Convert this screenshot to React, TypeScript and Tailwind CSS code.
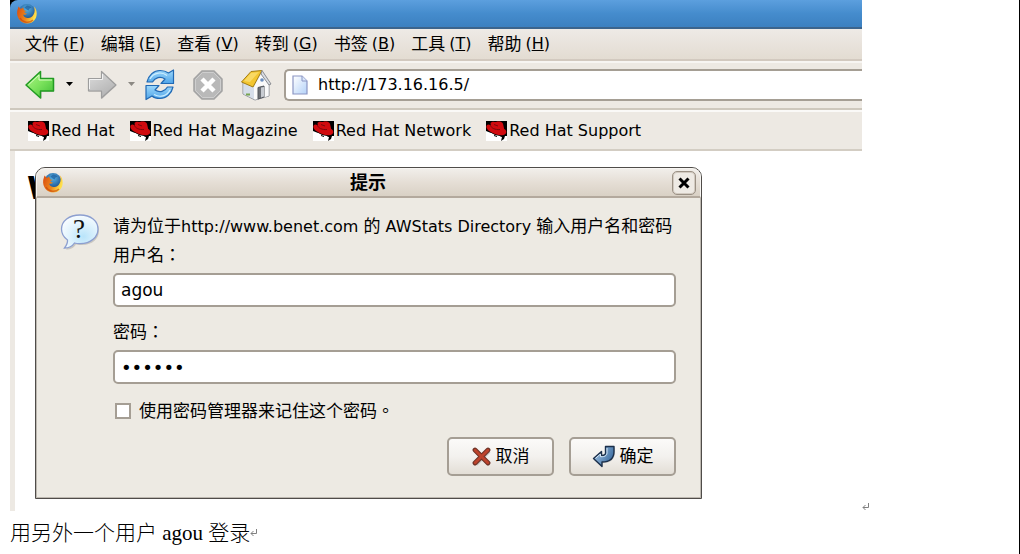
import React from "react";

const menus = [
  { label: "文件", accessKey: "F" },
  { label: "编辑", accessKey: "E" },
  { label: "查看", accessKey: "V" },
  { label: "转到", accessKey: "G" },
  { label: "书签", accessKey: "B" },
  { label: "工具", accessKey: "T" },
  { label: "帮助", accessKey: "H" },
];

const bookmarks = ["Red Hat", "Red Hat Magazine", "Red Hat Network", "Red Hat Support"];

const FirefoxIcon = () => (
  <svg width="22" height="22" viewBox="0 0 22 22" aria-hidden="true">
    <defs>
      <radialGradient id="globe" cx="0.5" cy="0.3" r="0.7">
        <stop offset="0" stopColor="#58b4e6" />
        <stop offset="1" stopColor="#123f80" />
      </radialGradient>
      <linearGradient id="fox" x1="0" y1="0" x2="1" y2="0.3">
        <stop offset="0" stopColor="#d94a10" />
        <stop offset="0.6" stopColor="#ee8a1c" />
        <stop offset="1" stopColor="#ffe04a" />
      </linearGradient>
    </defs>
    <circle cx="11" cy="9.5" r="8.5" fill="url(#globe)" />
    <path d="M11 2.5c2 0 3.5 1 4.500 2l-2 1-1 2-2-1-2-2z" fill="#1c5c9c" opacity=".7" />
    <path
      d="M2.500 3.500 1.200 8c-1 7 4 12.500 10 12.500 6 0 9.500-4.500 9.500-10 0-3-1-5.500-2.700-7 .8 2.500 1 5-.2 7.500-1.300 3-3.800 4.500-6.500 4-2.500-.4-4-2-4.200-3.500 1 .5 2.700.5 4-.8-1-.4-2.300-.3-2.800-1.700L11 8 8.300 7.500 7 4.600 5 6z"
      fill="url(#fox)"
    />
    <path d="M4 15c2.500 4.500 9 6 13 2" stroke="#c63d0c" strokeWidth="1.500" fill="none" opacity=".6" />
  </svg>
);

const RedHatIcon = () => (
  <svg width="21" height="20" viewBox="0 0 21 20" aria-hidden="true">
    <path fill="#fff" d="M0 0h21v20H0z" />
    <path fill="#000" d="M0 0h21v15h-2l-1 3-3 2 1-4-6-1-5-3-5-2z" />
    <path fill="#fff" d="M5 12l4 2 5 1 1 1.500-2 .5-1 3H4z" />
    <path
      fill="#d00a0e"
      d="M4.500 2C6 0 8.500.8 10 1c2.500-.8 6-.5 7 1.800l1.200 5.200c3 1.500 2.800 5-.7 6-4 .8-9.500-.7-13.500-3.500C1 8.500-.5 6 .8 4.200c1-1 2.700-.8 4 .5z"
    />
    <path d="M4.500 4.500c.8 2.500 4.500 4.500 9.500 4M8 3.500l4 1.500" stroke="#7c080b" strokeWidth="1" fill="none" />
    <path d="M8 14.500l3 1" stroke="#000" strokeWidth="1" />
  </svg>
);

const BackIcon = () => (
  <svg width="32" height="32" viewBox="0 0 32 32" aria-hidden="true">
    <defs>
      <linearGradient id="green" x1="0" y1="0" x2="1" y2="1">
        <stop offset="0" stopColor="#b4f58a" />
        <stop offset="0.5" stopColor="#7be25c" />
        <stop offset="1" stopColor="#3ebc35" />
      </linearGradient>
    </defs>
    <path d="M3 17 17 4v7h13v12H18v7z" fill="#000" opacity=".12" />
    <path d="M2 16 16.500 2.500V9.500H29.500V22H16.500v7z" fill="url(#green)" stroke="#229b23" strokeWidth="1.500" strokeLinejoin="round" />
    <path d="M4.500 15.800 15 6v5h13" stroke="#d8ffc2" strokeWidth="1" fill="none" />
  </svg>
);

const ForwardIcon = () => (
  <svg width="32" height="32" viewBox="0 0 32 32" aria-hidden="true">
    <defs>
      <linearGradient id="gray" x1="0" y1="0" x2="0.6" y2="1">
        <stop offset="0" stopColor="#dedede" />
        <stop offset="1" stopColor="#b2b2b2" />
      </linearGradient>
    </defs>
    <path d="M30 17 16 30h-1v-7H3v-2z" fill="#000" opacity=".12" />
    <path d="M30 16 15.500 2.500V9.500H2.500V22h13v7z" fill="url(#gray)" stroke="#9d9d9d" strokeWidth="1.200" strokeLinejoin="round" />
    <path d="M3.500 20V10.500h13V5" stroke="#f2f2f2" strokeWidth="1" fill="none" />
  </svg>
);

const ReloadIcon = () => (
  <svg width="32" height="32" viewBox="0 0 32 32" aria-hidden="true">
    <defs>
      <linearGradient id="blue" x1="0" y1="0" x2="0" y2="1">
        <stop offset="0" stopColor="#9ed8fb" />
        <stop offset="1" stopColor="#4fa4e8" />
      </linearGradient>
    </defs>
    <g fill="url(#blue)" stroke="#2169b4" strokeWidth="1.200" strokeLinejoin="round">
      <path d="M3 13C4.500 6 10 1.500 16 1.500c3.500 0 6 .7 8.500 2.500L29.500 1v13.500H17l4-4.500c-4.500-3-10-1.500-12.500 3z" />
      <path d="M29 18c-1.500 7-7 11.500-13 11.500-3.500 0-6-.7-8-2.500L2 30.500V16.500h13l-4 4.500c4.500 3 10 1.500 12.500-3z" />
    </g>
    <path d="M6 10c3-6 11-8 17-3.500M26 21c-3 6-10 8-16 4.500" stroke="#cdeeff" strokeWidth="1.200" fill="none" />
  </svg>
);

const StopIcon = () => (
  <svg width="32" height="32" viewBox="0 0 32 32" aria-hidden="true">
    <path d="M10 2h12l8 8v12l-8 8H10l-8-8V10z" fill="#b9b9b9" stroke="#a3a3a3" strokeWidth="1.500" />
    <path d="M10.500 3.500h11l7 7v11l-7 7h-11l-7-7v-11z" fill="none" stroke="#cecece" />
    <path d="m10 10 12 12m0-12-12 12" stroke="#fff" strokeWidth="4.500" />
  </svg>
);

const HomeIcon = () => (
  <svg width="32" height="32" viewBox="0 0 32 32" aria-hidden="true">
    <path d="M3 14v11l12 6 14-4V14L22 3z" fill="#e9eef4" stroke="#8c8f96" strokeLinejoin="round" />
    <path d="M3.500 14v11L15 30.500V17z" fill="#d6deea" />
    <path d="m22 4-8 14v12l1.500.5L28.500 27V14z" fill="#fafafa" />
    <path d="M18 18.500l6-1.500v11l-6 2z" fill="#6d7177" stroke="#53575d" />
    <path d="M21 18.500 24 18v9.500l-3 1z" fill="#c8ccd2" />
    <circle cx="22" cy="11" r="1.800" fill="#6b8fc0" />
    <path d="M11 2.500 22 1.500 13 18 1.500 13z" fill="#f3c631" stroke="#a37d14" strokeLinejoin="round" />
    <path d="m11 4 8-1-9 10-6-1z" fill="#fbe17a" opacity=".7" />
    <path d="m22 1.500 9 13.500-2 1-8-11z" fill="#d9dde3" stroke="#8a8d92" strokeLinejoin="round" />
    <path d="M6 25.500h4" stroke="#78a550" strokeWidth="2" />
  </svg>
);

const PageIcon = () => (
  <svg width="16" height="20" viewBox="0 0 16 20" aria-hidden="true">
    <defs>
      <linearGradient id="sheet" x1="0" y1="0" x2="1" y2="1">
        <stop offset="0" stopColor="#ffffff" />
        <stop offset="1" stopColor="#b4d2f8" />
      </linearGradient>
    </defs>
    <path d="M1 1h9l5 5v13H1z" fill="url(#sheet)" stroke="#8b96c4" strokeWidth="1.200" />
    <path d="M10 1v5h5" fill="#dbe8fb" stroke="#8b96c4" />
  </svg>
);

const QuestionIcon = () => (
  <svg width="40" height="37" viewBox="0 0 40 37" className="block" aria-hidden="true">
    <defs>
      <radialGradient id="bubble" cx="0.6" cy="0.65" r="0.7">
        <stop offset="0" stopColor="#b9e4fa" />
        <stop offset="0.6" stopColor="#e3f4fd" />
        <stop offset="1" stopColor="#fafdff" />
      </radialGradient>
    </defs>
    <path d="M21 2C10 2 3 8 3 16c0 5 2.500 8.500 6 11 .3 3-.7 5.500-3 8.500 5 0 8-2 10-5 1.500.5 4 .5 6 .5 11 0 17-6.500 17-14.500C39 8 32 2 21 2z" fill="#000" opacity=".15" />
    <path d="M20 1C9 1 1.500 7 1.500 15c0 5 2.500 8.500 6 11 .3 3-.7 5-3 8 5 0 8-2 10-5 1.500.5 3.500.7 5.500.7C31 29.700 38 23 38 15S31 1 20 1z" fill="url(#bubble)" stroke="#8c9fd0" strokeWidth="1.300" />
    <text x="13" y="24" fontSize="27" fill="#111" fontFamily="'Liberation Serif', serif">?</text>
  </svg>
);

const CancelIcon = () => (
  <svg width="20" height="20" viewBox="0 0 20 20" aria-hidden="true">
    <path d="m4 4 13 13m0-13L4 17" stroke="#000" strokeWidth="4" opacity=".18" />
    <path d="m3 3 13 13m0-13-13 13" stroke="#6e3328" strokeWidth="4.800" strokeLinecap="round" />
    <path d="m3.200 3.200 12.600 12.600m0-12.600L3.200 15.800" stroke="#bd432c" strokeWidth="2.800" strokeLinecap="round" />
  </svg>
);

const OkIcon = () => (
  <svg width="24" height="24" viewBox="0 0 24 24" aria-hidden="true">
    <defs>
      <linearGradient id="steel" x1="0" y1="0" x2="1" y2="0.5">
        <stop offset="0" stopColor="#a9cbe8" />
        <stop offset="1" stopColor="#3e6ea2" />
      </linearGradient>
    </defs>
    <path d="M2 15 10 8v4c4 0 5-1 4.500-5V2.500H23V7c0 8-5 11-12.500 11v4z" fill="#000" opacity=".15" />
    <path
      d="M1.500 13.500 9.500 6.500v4c3.500 0 4.500-1 4-4.500V1.500h8.500v5c0 8-5 10.500-12 10.500v4.500z"
      fill="url(#steel)"
      stroke="#1b2f4a"
      strokeWidth="1.400"
      strokeLinejoin="round"
    />
    <path d="M3.500 13.300 8.500 9v2.700c5 .3 7-1.500 6.500-5.500V3" stroke="#d5e7f6" fill="none" />
  </svg>
);

const ReturnMark = () => (
  <svg width="8" height="8" viewBox="0 0 8 8" className="block shrink-0" aria-hidden="true">
    <path d="M6.500 0v4.500H1M3.500 2 1 4.500 3.500 7" stroke="#808080" fill="none" />
  </svg>
);

const DropArrow = ({ color }: any) => (
  <svg width="8" height="5" viewBox="0 0 8 5" aria-hidden="true">
    <path d="M0 0h7L3.500 4z" fill={color} />
  </svg>
);

const DialogButton = ({ icon, label }: any) => (
  <button
    type="button"
    className="flex h-[39px] w-[107px] items-center justify-center gap-1 rounded-[5px] border-2 border-[#a59e94] bg-linear-to-b from-[#fbfaf9] via-[#f3f1ee] to-[#e3ded6] text-[17px]"
  >
    {icon}
    {label}
  </button>
);

const PromptDialog = () => (
  <form
    role="dialog"
    aria-labelledby="prompt-title"
    className="relative mr-[160px] ml-5 rounded-t-[10px] border border-[#4f4c49] bg-[#edeae3] shadow-[inset_0_0_0_1px_#bdb8b0]"
  >
    <header className="flex h-[30px] items-center rounded-t-[9px] border border-b-2 border-[#f7f5f2] border-b-[#b3a99d] bg-linear-to-b from-[#f1eeea] via-[#e5ded5] to-[#d9d1c5] pr-1 pl-[5px]">
      <FirefoxIcon />
      <h2 id="prompt-title" className="flex-1 text-center text-[18px] leading-6 font-bold">
        提示
      </h2>
      <button
        type="button"
        aria-label="关闭"
        className="flex h-6 w-6 items-center justify-center rounded-[5px] border border-[#9b9185] bg-[#eeeae4] shadow-[inset_0_0_0_1px_#d2cac0]"
      >
        <svg width="12" height="12" viewBox="0 0 12 12" aria-hidden="true">
          <path d="m1.500 1.500 9 9m0-9-9 9" stroke="#000" strokeWidth="3" />
        </svg>
      </button>
    </header>
    <div className="flex gap-[13px] pt-3.5 pr-[25px] pb-[22px] pl-6">
      <div className="shrink-0 pt-0.5">
        <QuestionIcon />
      </div>
      <div className="min-w-0 flex-1">
        <p className="text-[17px] leading-7 whitespace-nowrap">
          请为位于<span className="text-[16px]">http://www.benet.com </span>的
          <span className="text-[16px]"> AWStats Directory </span>输入用户名和密码
        </p>
        <label htmlFor="user" className="block font-['DejaVu_Sans','Noto_Sans_CJK_TC',sans-serif] text-[17px] leading-7">
          用户名：
        </label>
        <input
          id="user"
          type="text"
          defaultValue="agou"
          className="mt-1 block h-[34px] w-full rounded-[5px] border-2 border-[#a59e94] bg-white px-1.5 text-[17px] outline-none"
        />
        <label htmlFor="pass" className="mt-[11px] block font-['DejaVu_Sans','Noto_Sans_CJK_TC',sans-serif] text-[17px] leading-7">
          密码：
        </label>
        <input
          id="pass"
          type="password"
          defaultValue="123456"
          className="mt-1 block h-[34px] w-full rounded-[5px] border-2 border-[#a59e94] bg-white px-1.5 text-[18px] outline-none"
        />
        <label className="mt-[13px] flex items-center gap-2 font-['DejaVu_Sans','Noto_Sans_CJK_TC',sans-serif] text-[17px] leading-7">
          <input type="checkbox" className="ml-0.5 h-4 w-4 appearance-none border-2 border-[#a59e94] bg-white" />
          使用密码管理器来记住这个密码。
        </label>
        <div className="mt-3 flex justify-end gap-[15px]">
          <DialogButton icon={<CancelIcon />} label="取消" />
          <DialogButton icon={<OkIcon />} label="确定" />
        </div>
      </div>
    </div>
  </form>
);

const BrowserWindow = () => (
  <section className="min-w-0 flex-1 bg-[#ede9e3]">
    <header className="bg-black">
      <div className="flex h-[29px] items-center rounded-tl-lg border-b-2 border-[#3c648c] bg-linear-to-b from-[#5c9fde] via-[#458ccd] to-[#3c80c0] pl-1.5">
        <FirefoxIcon />
      </div>
    </header>
    <nav className="flex h-8 items-center gap-4 border-b-2 border-[#d2c9bf] bg-linear-to-b from-[#eeeae6] to-[#e3dcd2] pl-[15px]">
      {menus.map((item) => (
        <button key={item.accessKey} type="button" className="flex items-center gap-1 text-[17px] leading-6 whitespace-nowrap">
          {item.label}
          <span className="text-[16px]">
            (<u>{item.accessKey}</u>)
          </span>
        </button>
      ))}
    </nav>
    <div className="flex h-[49px] items-center border-t-2 border-b-2 border-t-[#f7f5f2] border-b-[#cec8bd] pb-0.5 pl-3.5">
      <button type="button" aria-label="后退">
        <BackIcon />
      </button>
      <button type="button" aria-label="后退历史" className="ml-2.5">
        <DropArrow color="#000" />
      </button>
      <button type="button" aria-label="前进" className="ml-3">
        <ForwardIcon />
      </button>
      <button type="button" aria-label="前进历史" className="ml-2.5">
        <DropArrow color="#8c8983" />
      </button>
      <button type="button" aria-label="刷新" className="ml-2">
        <ReloadIcon />
      </button>
      <button type="button" aria-label="停止" className="ml-4">
        <StopIcon />
      </button>
      <button type="button" aria-label="主页" className="ml-4">
        <HomeIcon />
      </button>
      <div className="ml-3 flex h-8 flex-1 items-center gap-2.5 rounded-l-[5px] border-2 border-r-0 border-[#a59e94] bg-white pl-1.5">
        <PageIcon />
        <input type="text" aria-label="地址" defaultValue="http://173.16.16.5/" className="min-w-0 flex-1 text-[16px] outline-none" />
      </div>
    </div>
    <nav className="flex h-[41px] items-center gap-[15px] border-t-2 border-b-2 border-t-[#faf9f7] border-b-[#d3cdc3] pl-[18px]">
      {bookmarks.map((title) => (
        <a key={title} href="#" className="flex items-center gap-0.5 text-[16px] whitespace-nowrap">
          <RedHatIcon />
          {title}
        </a>
      ))}
    </nav>
    <div className="relative ml-[5px] bg-white pt-4 pb-3">
      <h1 className="absolute top-[19px] left-3 text-[32px] leading-9 font-bold">W</h1>
      <PromptDialog />
    </div>
  </section>
);

const App = () => {
  return (
    <main className="min-h-screen border-r border-black bg-white pl-2.5 font-['DejaVu_Sans','Noto_Sans_CJK_SC',sans-serif] text-black">
      <div className="flex items-end pr-[149px]">
        <BrowserWindow />
        <ReturnMark />
      </div>
      <p className="mt-1.5 flex items-center font-['Liberation_Serif','Noto_Sans_CJK_SC',serif] text-[21px] leading-8 font-light">
        用另外一个用户 agou 登录
        <ReturnMark />
      </p>
    </main>
  );
};

export default App;
